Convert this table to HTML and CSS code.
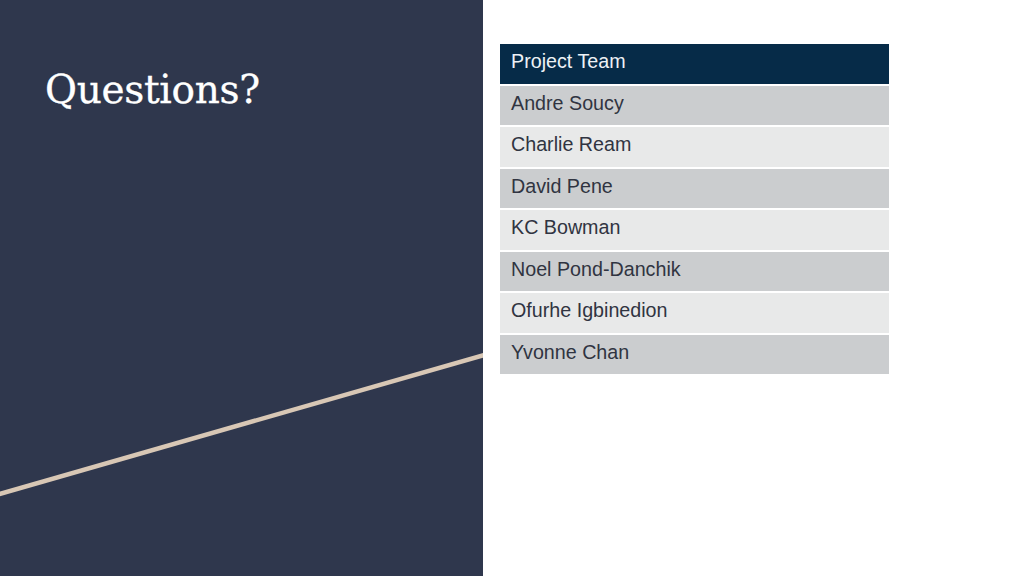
FILE: index.html
```html
<!DOCTYPE html>
<html>
<head>
<meta charset="utf-8">
<link rel="stylesheet" href="styles.css">
</head>
<body>
<div class="slide">
  <section class="left">
    <h1 class="title">Questions?</h1>
    <svg class="accent" width="483" height="576" viewBox="0 0 483 576">
      <line x1="-2" y1="494.5" x2="484" y2="355" stroke="#d8c7b5" stroke-width="4.5"/>
    </svg>
  </section>
  <section class="right">
    <div class="team">
      <div class="row head">Project Team</div>
      <div class="row dark">Andre Soucy</div>
      <div class="row light">Charlie Ream</div>
      <div class="row dark">David Pene</div>
      <div class="row light">KC Bowman</div>
      <div class="row dark">Noel Pond-Danchik</div>
      <div class="row light">Ofurhe Igbinedion</div>
      <div class="row dark">Yvonne Chan</div>
    </div>
  </section>
</div>
</body>
</html>
```

FILE: styles.css
```css
html, body {
  margin: 0;
  padding: 0;
}
body {
  width: 1024px;
  height: 576px;
  overflow: hidden;
  background: #ffffff;
}
.slide {
  display: flex;
  width: 1024px;
  height: 576px;
}
.left {
  position: relative;
  width: 483px;
  height: 576px;
  background: #2f374d;
  flex: none;
}
.title {
  margin: 0;
  padding: 63px 0 0 45px;
  font-family: "DejaVu Serif", "Liberation Serif", serif;
  font-weight: normal;
  font-size: 39px;
  line-height: 54px;
  color: #ffffff;
  letter-spacing: -0.3px;
  -webkit-text-stroke: 0.3px #ffffff;
}
.accent {
  position: absolute;
  left: 0;
  top: 0;
}
.right {
  flex: 1;
  padding: 44px 0 0 17px;
}
.team {
  width: 389px;
  display: grid;
  grid-auto-rows: 39.5px;
  row-gap: 2px;
}
.row {
  display: flex;
  align-items: center;
  padding-left: 11px;
  padding-bottom: 4px;
  font-family: "Liberation Sans", Arial, sans-serif;
  font-size: 19.7px;
  color: #303441;
}
.head {
  background: #062b48;
  color: #eef2f6;
}
.dark {
  background: #cbcdcf;
}
.light {
  background: #e8e9e9;
}
```
